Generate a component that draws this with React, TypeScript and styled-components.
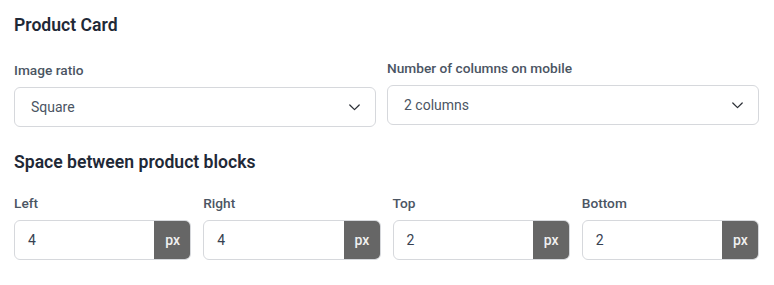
import React from "react";
import styled, { createGlobalStyle } from "styled-components";

const Global = createGlobalStyle`
  * { box-sizing: border-box; }
  body { margin: 0; background: #ffffff; font-family: Roboto, "Noto Sans", Arial, sans-serif; }
`;

const Page = styled.div`
  width: 774px;
  padding: 13px 15px 0 14px;
`;

const Title = styled.h2`
  margin: 0;
  font-size: 17.6px;
  line-height: 24px;
  font-weight: 600;
  color: #1f2937;
`;

const TopGrid = styled.div`
  display: grid;
  grid-template-columns: 362px 372px;
  column-gap: 11px;
  margin-top: 21px;
  margin-bottom: 23px;
`;

const Field = styled.div<{ $shift?: number }>`
  display: flex;
  flex-direction: column;
  gap: 7px;
  margin-top: ${(p) => p.$shift ?? 0}px;
`;

const Label = styled.label`
  font-size: 13.7px;
  line-height: 20px;
  font-weight: 500;
  color: #4b5563;
`;

const Select = styled.div`
  height: 40px;
  border: 1px solid #d6d8dc;
  border-radius: 6px;
  display: flex;
  align-items: center;
  justify-content: space-between;
  padding: 0 15px 0 16px;
  font-size: 14px;
  color: #4b5563;
`;

const Chevron = () => (
  <svg width="11" height="7" viewBox="0 0 11 7" fill="none">
    <polyline points="0.8,1 5.5,5.6 10.2,1" stroke="#2b2f36" strokeWidth="1.25" strokeLinecap="round" strokeLinejoin="round" />
  </svg>
);

const FourGrid = styled.div`
  display: grid;
  grid-template-columns: repeat(4, 1fr);
  column-gap: 12px;
  margin-top: 19px;
`;

const InputGroup = styled.div`
  height: 40px;
  display: flex;
  border: 1px solid #d6d8dc;
  border-radius: 6px;
  overflow: hidden;
`;

const Value = styled.div`
  flex: 1;
  display: flex;
  align-items: center;
  padding-left: 13px;
  font-size: 14px;
  color: #374151;
`;

const Unit = styled.div`
  width: 37px;
  margin: -1px -1px -1px 0;
  background: #666666;
  color: #f0f0f0;
  font-size: 14px;
  font-weight: 500;
  display: flex;
  align-items: center;
  justify-content: center;
`;

const spacing = [
  { label: "Left", value: "4" },
  { label: "Right", value: "4" },
  { label: "Top", value: "2" },
  { label: "Bottom", value: "2" },
];

export default function App() {
  return (
    <>
      <Global />
      <Page>
        <Title>Product Card</Title>
        <TopGrid>
          <Field $shift={2}>
            <Label>Image ratio</Label>
            <Select>
              <span>Square</span>
              <Chevron />
            </Select>
          </Field>
          <Field>
            <Label>Number of columns on mobile</Label>
            <Select>
              <span>2 columns</span>
              <Chevron />
            </Select>
          </Field>
        </TopGrid>
        <Title>Space between product blocks</Title>
        <FourGrid>
          {spacing.map((s) => (
            <Field key={s.label}>
              <Label>{s.label}</Label>
              <InputGroup>
                <Value>{s.value}</Value>
                <Unit>px</Unit>
              </InputGroup>
            </Field>
          ))}
        </FourGrid>
      </Page>
    </>
  );
}
